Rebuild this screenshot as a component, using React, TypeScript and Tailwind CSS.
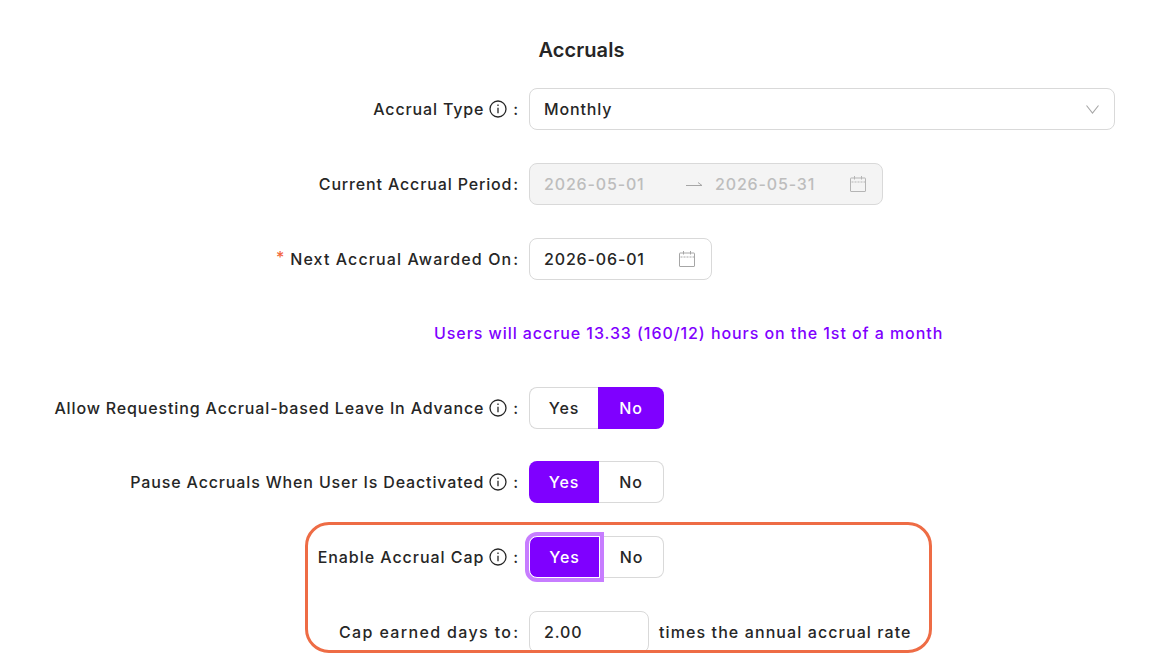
import { ReactNode } from "react";

const Info = () => (
  <svg width="18" height="18" viewBox="0 0 18 18" fill="none" stroke="#262626" strokeWidth="1.3" className="ml-[5px] shrink-0">
    <circle cx="9" cy="9" r="8" />
    <path d="M9 7.8v5.4" />
    <path d="M9 4.6v1.5" />
  </svg>
);

const Calendar = ({ color }: { color: string }) => (
  <svg width="16" height="16" viewBox="0 0 16 16" fill="none" stroke={color} strokeWidth="1" className="shrink-0">
    <rect x="0.5" y="2" width="15" height="13.5" rx="0.5" />
    <path d="M0.5 6h15" strokeDasharray="1 0.5" />
    <path d="M4.5 0v3.5M11.5 0v3.5" />
  </svg>
);

function Row({ label, info, required, labelClass, children }: { label: string; info?: boolean; required?: boolean; labelClass?: string; children: ReactNode }) {
  return (
    <div className="flex items-center h-[42px]">
      <div className="w-[519px] flex items-center justify-end text-[#262626] whitespace-nowrap">
        {required && <span className="text-[#f2673d] mr-[5px] relative top-[-2px]">*</span>}
        <span className={labelClass}>{label}</span>
        {info && <Info />}
        <span className={info ? "ml-[6px]" : "ml-[1px]"}>:</span>
      </div>
      <div className="ml-[10px] flex items-center">{children}</div>
    </div>
  );
}

function Toggle({ active, focused }: { active: "Yes" | "No"; focused?: boolean }) {
  return (
    <div className="flex h-[42px] w-[135px]">
      <div
        className={
          active === "Yes"
            ? `flex items-center justify-center bg-[#7f00ff] text-white rounded-l-lg font-medium ${focused ? "w-[71px] relative z-10 outline-[4px] outline-[#c77dff] border border-white" : "w-[70px]"}`
            : "w-[69px] flex items-center justify-center bg-white border border-r-0 border-[#d9d9d9] rounded-l-lg text-[#262626]"
        }
      >
        Yes
      </div>
      <div
        className={
          active === "No"
            ? "flex-1 flex items-center justify-center bg-[#7f00ff] text-white rounded-r-lg font-medium"
            : "flex-1 flex items-center justify-center bg-white border border-l-0 border-[#d9d9d9] rounded-r-lg text-[#262626]"
        }
      >
        No
      </div>
    </div>
  );
}

export default function App() {
  return (
    <div className="h-[666px] overflow-hidden bg-white text-[16px] tracking-[0.85px] font-['Inter',sans-serif] font-[450] text-[#262626]">
      <h2 className="text-center text-[20px] font-semibold pt-[36px] leading-[28px] tracking-[0.1px] pl-[1px]">Accruals</h2>
      <div className="mt-[24.45px] flex flex-col gap-[32.6px]">
        <Row label="Accrual Type" info>
          <div className="w-[586px] h-[42px] border border-[#d9d9d9] rounded-lg flex items-center justify-between pl-[14px] pr-[15px]">
            <span>Monthly</span>
            <svg width="13" height="9" viewBox="0 0 13 9" fill="none" stroke="#a6a6a6" strokeWidth="1.1">
              <path d="M0.5 0.500L6.500 8L12.500 0.500" />
            </svg>
          </div>
        </Row>
        <Row label="Current Accrual Period">
          <div className="w-[354px] h-[42px] border border-[#d9d9d9] bg-[#f4f4f4] rounded-lg flex items-center pl-[14px] pr-[16px] text-[#bdbdbd]">
            <span className="w-[142px]">2026-05-01</span>
            <svg width="16" height="6" viewBox="0 0 16 6" fill="none" stroke="#a6a6a6" strokeWidth="1">
              <path d="M0 4.500h16L12 1.500" />
            </svg>
            <span className="ml-[13px]">2026-05-31</span>
            <span className="ml-auto"><Calendar color="#b5b5b5" /></span>
          </div>
        </Row>
        <Row label="Next Accrual Awarded On" required labelClass="tracking-[1.1px]">
          <div className="w-[183px] h-[42px] border border-[#d9d9d9] rounded-lg flex items-center justify-between pl-[14px] pr-[16px]">
            <span>2026-06-01</span>
            <Calendar color="#a6a6a6" />
          </div>
        </Row>
        <div className="h-[42px] flex items-center pl-[434px] text-[#7f00ff] tracking-[0.93px]">Users will accrue 13.33 (160/12) hours on the 1st of a month</div>
        <Row label="Allow Requesting Accrual-based Leave In Advance" info>
          <Toggle active="No" />
        </Row>
        <Row label="Pause Accruals When User Is Deactivated" info>
          <Toggle active="Yes" />
        </Row>
        <div className="relative flex flex-col gap-[32.6px]">
          <Row label="Enable Accrual Cap" info labelClass="tracking-[0.95px]">
            <Toggle active="Yes" focused />
          </Row>
          <Row label="Cap earned days to" labelClass="tracking-[1.35px]">
            <div className="w-[120px] h-[42px] border border-[#d9d9d9] rounded-lg flex items-center pl-[14px]">2.00</div>
            <span className="ml-[10px] whitespace-nowrap tracking-[1.1px]">times the annual accrual rate</span>
          </Row>
          <div className="absolute left-[305px] top-[-14px] w-[627px] h-[131px] border-[3px] border-[#ee6c45] rounded-[24px] pointer-events-none" />
        </div>
      </div>
    </div>
  );
}
